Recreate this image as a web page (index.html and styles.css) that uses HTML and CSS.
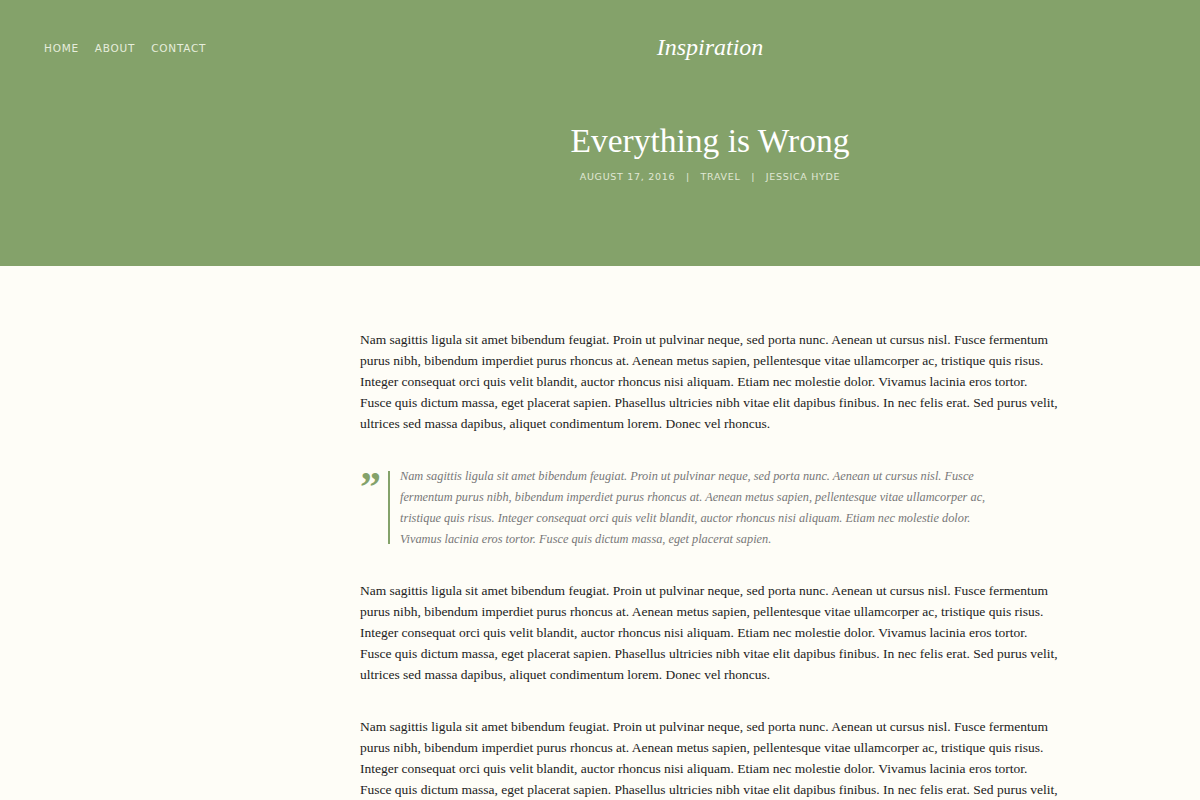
FILE: index.html
```html
<!DOCTYPE html>
<html>
<head>
<meta charset="utf-8">
<link rel="stylesheet" href="styles.css">
</head>
<body>
<header class="hero">
  <div class="topbar">
    <nav class="nav">
      <a href="#">Home</a>
      <a href="#">About</a>
      <a href="#">Contact</a>
    </nav>
    <div class="logo">Inspiration</div>
    <div class="spacer"></div>
  </div>
  <div class="titlerow">
    <div></div>
    <div class="titlebox">
      <h1 class="title">Everything is Wrong</h1>
      <div class="meta">August 17, 2016 <span class="sep">|</span> Travel <span class="sep">|</span> Jessica Hyde</div>
    </div>
    <div></div>
  </div>
</header>
<main class="content">
  <div></div>
  <article class="post">
    <p>Nam sagittis ligula sit amet bibendum feugiat. Proin ut pulvinar neque, sed porta nunc. Aenean ut cursus nisl. Fusce fermentum purus nibh, bibendum imperdiet purus rhoncus at. Aenean metus sapien, pellentesque vitae ullamcorper ac, tristique quis risus. Integer consequat orci quis velit blandit, auctor rhoncus nisi aliquam. Etiam nec molestie dolor. Vivamus lacinia eros tortor. Fusce quis dictum massa, eget placerat sapien. Phasellus ultricies nibh vitae elit dapibus finibus. In nec felis erat. Sed purus velit, ultrices sed massa dapibus, aliquet condimentum lorem. Donec vel rhoncus.</p>
    <blockquote class="quote">
      <span class="qmark">&rdquo;</span>
      <p>Nam sagittis ligula sit amet bibendum feugiat. Proin ut pulvinar neque, sed porta nunc. Aenean ut cursus nisl. Fusce fermentum purus nibh, bibendum imperdiet purus rhoncus at. Aenean metus sapien, pellentesque vitae ullamcorper ac, tristique quis risus. Integer consequat orci quis velit blandit, auctor rhoncus nisi aliquam. Etiam nec molestie dolor. Vivamus lacinia eros tortor. Fusce quis dictum massa, eget placerat sapien.</p>
    </blockquote>
    <p>Nam sagittis ligula sit amet bibendum feugiat. Proin ut pulvinar neque, sed porta nunc. Aenean ut cursus nisl. Fusce fermentum purus nibh, bibendum imperdiet purus rhoncus at. Aenean metus sapien, pellentesque vitae ullamcorper ac, tristique quis risus. Integer consequat orci quis velit blandit, auctor rhoncus nisi aliquam. Etiam nec molestie dolor. Vivamus lacinia eros tortor. Fusce quis dictum massa, eget placerat sapien. Phasellus ultricies nibh vitae elit dapibus finibus. In nec felis erat. Sed purus velit, ultrices sed massa dapibus, aliquet condimentum lorem. Donec vel rhoncus.</p>
    <p>Nam sagittis ligula sit amet bibendum feugiat. Proin ut pulvinar neque, sed porta nunc. Aenean ut cursus nisl. Fusce fermentum purus nibh, bibendum imperdiet purus rhoncus at. Aenean metus sapien, pellentesque vitae ullamcorper ac, tristique quis risus. Integer consequat orci quis velit blandit, auctor rhoncus nisi aliquam. Etiam nec molestie dolor. Vivamus lacinia eros tortor. Fusce quis dictum massa, eget placerat sapien. Phasellus ultricies nibh vitae elit dapibus finibus. In nec felis erat. Sed purus velit, ultrices sed massa dapibus, aliquet condimentum lorem. Donec vel rhoncus.</p>
  </article>
  <div></div>
</main>
</body>
</html>
```

FILE: styles.css
```css
* { box-sizing: border-box; }
html, body { margin: 0; padding: 0; }
body {
  background: #fefdf7;
  font-family: "Liberation Serif", "Times New Roman", serif;
  color: #222;
}
.hero {
  background: #84a26a;
  height: 266px;
}
.topbar {
  display: grid;
  grid-template-columns: 360px 700px 140px;
  align-items: center;
  padding-top: 31px;
  height: 64px;
}
.nav {
  display: flex;
  gap: 16px;
  padding-left: 44px;
}
.nav a {
  font-family: "DejaVu Sans", sans-serif;
  font-size: 10.5px;
  letter-spacing: 0.75px;
  text-transform: uppercase;
  color: #e6eddc;
  text-decoration: none;
}
.logo {
  text-align: center;
  font-style: italic;
  font-size: 24px;
  color: #fff;
}
.titlerow {
  display: grid;
  grid-template-columns: 360px 700px 140px;
  padding-top: 57px;
}
.titlebox { text-align: center; }
.title {
  margin: 0;
  font-weight: normal;
  font-size: 33.5px;
  line-height: 40px;
  color: #fff;
}
.meta {
  margin-top: 10px;
  font-family: "DejaVu Sans", sans-serif;
  font-size: 9.5px;
  letter-spacing: 0.7px;
  text-transform: uppercase;
  color: #e0e8d5;
}
.sep { margin: 0 7px; }
.content {
  display: grid;
  grid-template-columns: 360px 700px 140px;
  padding-top: 63px;
}
.post p {
  margin: 0 0 31px;
  font-size: 13.5px;
  line-height: 21px;
}
.quote {
  display: flex;
  margin: 32px 0 30px;
  padding: 0;
}
.qmark {
  width: 28px;
  flex: none;
  font-size: 42px;
  font-weight: bold;
  line-height: 42px;
  height: 30px;
  color: #84a26a;
}
.post .quote p {
  margin: 0;
  padding-left: 12px;
  background-image: linear-gradient(#84a26a, #84a26a);
  background-repeat: no-repeat;
  background-size: 2px calc(100% - 11px);
  background-position: 0 5px;
  font-style: italic;
  font-size: 12.3px;
  color: #777;
  max-width: 612px;
}
```
